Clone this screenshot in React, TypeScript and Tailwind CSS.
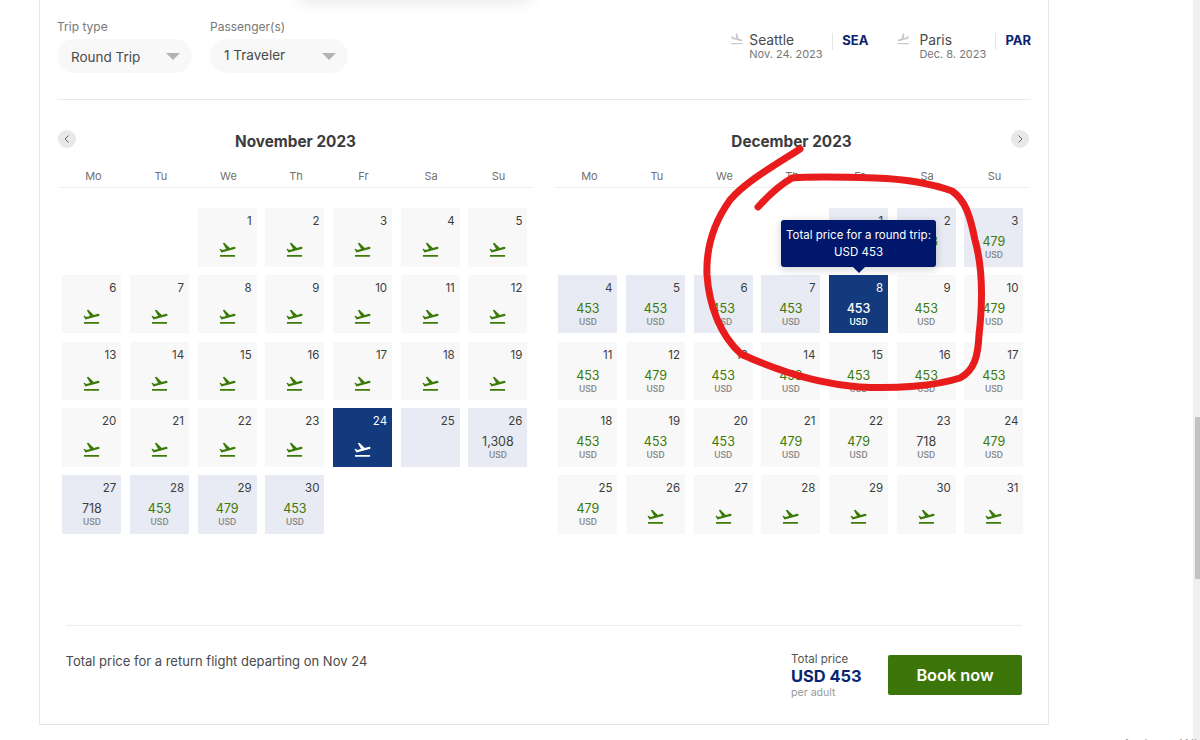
import React from "react";

type Cell = { d?: number; p?: string; v?: "plain" | "range" | "sel"; dark?: boolean };

function Takeoff({ className }: { className: string }) {
  return (
    <svg viewBox="0 0 24 24" className={className} fill="currentColor" aria-hidden="true">
      <path d="M2.5 19h19v2h-19zm19.57-9.36c-.21-.8-1.04-1.28-1.84-1.06L14.92 10l-6.9-6.43-1.93.51 4.14 7.17-4.97 1.33-1.97-1.54-1.45.39 2.59 4.49L21 11.49c.81-.23 1.28-1.05 1.07-1.85z" />
    </svg>
  );
}

function Land({ className }: { className: string }) {
  return (
    <svg viewBox="0 0 24 24" className={className} fill="currentColor" aria-hidden="true">
      <path d="M2.5 19h19v2h-19zm7.18-5.73 4.35 1.16 5.31 1.42c.8.21 1.62-.26 1.84-1.06.21-.8-.26-1.62-1.06-1.84l-5.31-1.42-2.76-9.02L10.12 2v8.28L5.15 8.95l-.93-2.32-1.45-.39v5.17l1.6.43 5.31 1.43z" />
    </svg>
  );
}

function Day({ c }: { c: Cell }) {
  if (!c.d) return <div />;
  const bg = c.v === "sel" ? "bg-[#123a7d] text-white" : c.v === "range" ? "bg-[#e8ebf3] text-[#3c3c3c]" : "bg-[#f8f8f8] text-[#3c3c3c]";
  return (
    <div className={`h-[58.5px] flex flex-col items-center ${bg}`}>
      <div className="w-full text-right pr-[5px] pt-[6px] text-[11.5px] leading-[14px]">{c.d}</div>
      {c.p ? (
        <>
          <div className={`mt-[6px] text-[12.5px] leading-[15px] ${c.v === "sel" ? "text-white font-medium" : c.dark ? "text-[#3f3f3f]" : "text-[#3c7a09]"}`}>{c.p}</div>
          <div className={`mt-[1px] text-[8.5px] leading-[11px] font-semibold ${c.v === "sel" ? "text-white" : "text-[#8a8a8a]"}`}>USD</div>
        </>
      ) : c.v === "range" ? null : (
        <Takeoff className={`w-[19px] h-[19px] mt-[12px] ${c.v === "sel" ? "text-white" : "text-[#3c7a09]"}`} />
      )}
    </div>
  );
}

const nov: Cell[] = [
  {}, {},
  ...Array.from({ length: 23 }, (_, i): Cell => ({ d: i + 1 })),
  { d: 24, v: "sel" },
  { d: 25, v: "range" },
  { d: 26, v: "range", p: "1,308", dark: true },
  { d: 27, v: "range", p: "718", dark: true },
  { d: 28, v: "range", p: "453" },
  { d: 29, v: "range", p: "479" },
  { d: 30, v: "range", p: "453" },
];

const decPrices: [string, boolean?][] = [
  ["453"], ["453"], ["479"],
  ["453"], ["453"], ["453"], ["453"], ["453"], ["453"], ["479"],
  ["453"], ["479"], ["453"], ["453"], ["453"], ["453"], ["453"],
  ["453"], ["453"], ["453"], ["479"], ["479"], ["718", true], ["479"],
  ["479"],
];

const dec: Cell[] = [
  {}, {}, {}, {},
  ...Array.from({ length: 31 }, (_, i): Cell => {
    const d = i + 1;
    const pr = decPrices[i];
    const v: Cell["v"] = d === 8 ? "sel" : d <= 7 ? "range" : "plain";
    return pr ? { d, p: pr[0], dark: pr[1], v } : { d, v };
  }),
];

const WEEK = ["Mo", "Tu", "We", "Th", "Fr", "Sa", "Su"];

function Month({ cells, title, side }: { cells: Cell[]; title: string; side: "l" | "r" }) {
  return (
    <div className="w-[473px]">
      <div className="relative h-[24px] flex items-center justify-center">
        <h2 className="text-[15.3px] font-bold text-[#3c3c3c] leading-[24px]">{title}</h2>
        <button className={`absolute top-[0px] w-[18px] h-[18px] rounded-full bg-[#e8e8e8] flex items-center justify-center text-[#666] ${side === "l" ? "-left-[1px]" : "-right-[1px]"}`}>
          <svg viewBox="0 0 10 10" className="w-[10px] h-[10px]" fill="none" stroke="currentColor" strokeWidth="1">
            <path d={side === "l" ? "M6.5 1.5 3 5l3.5 3.5" : "M3.5 1.5 7 5 3.5 8.5"} />
          </svg>
        </button>
      </div>
      <div className="grid grid-cols-7 mt-[14px] h-[20px] border-b border-[#ececec] pl-[5px] pr-[4px] gap-x-[8.67px] text-[11px] text-[#6f6f6f] text-center leading-[16px]">
        {WEEK.map((w) => <div key={w}>{w}</div>)}
      </div>
      <div className="grid grid-cols-7 gap-x-[8.67px] gap-y-[8.3px] pl-[3.4px] pr-[4.6px] mt-[20px]">
        {cells.map((c, i) => <Day key={i} c={c} />)}
      </div>
    </div>
  );
}

function Select({ label, value, width, textPad }: { label: string; value: string; width: string; textPad: string }) {
  return (
    <div>
      <div className="text-[12px] leading-[16px] text-[#777] mb-[4px]">{label}</div>
      <div className={`h-[34px] rounded-[17px] bg-[#f8f8f8] flex items-center justify-between pl-[14px] pr-[12px] ${width}`}>
        <span className={`text-[13.5px] text-[#4a4a4a] ${textPad}`}>{value}</span>
        <span className="w-0 h-0 border-l-[7px] border-r-[7px] border-t-[7px] border-l-transparent border-r-transparent border-t-[#b3b3b3]" />
      </div>
    </div>
  );
}

function Route({ icon, city, date, code, w, iconW }: { icon: React.ReactNode; city: string; date: string; code: string; w: string; iconW: string }) {
  return (
    <div className="flex items-start">
      <div className={`${iconW} -mt-[1px] text-[#c9c9c9]`}>{icon}</div>
      <div className={w}>
        <div className="text-[13.8px] leading-[14px] text-[#4a4a4a]">{city}</div>
        <div className="text-[11px] leading-[14px] text-[#777]">{date}</div>
      </div>
      <div className="border-l border-[#e6e6e6] h-[17px] pl-[9px] text-[13px] leading-[14px] font-bold text-[#0a2472]">{code}</div>
    </div>
  );
}

export default function App() {
  return (
    <div className="relative w-[1200px] h-[740px] overflow-hidden bg-white flex" style={{ fontFamily: "Inter, 'Liberation Sans', sans-serif" }}>
      <div className="flex-1 pl-[39px]">
        <div className="w-[1010px] h-[725px] border-x border-b border-[#e6e6e6] px-[17px]">
          <header className="h-[100px] border-b border-[#e8e8e8] flex justify-between pt-[19px] w-[974px]">
            <div className="flex gap-[18px]">
              <Select label="Trip type" value="Round Trip" width="w-[135px]" textPad="pt-[2px]" />
              <Select label="Passenger(s)" value="1 Traveler" width="w-[138px]" textPad="pb-[1px]" />
            </div>
            <div className="flex pt-[14px] gap-[28px]">
              <Route icon={<Land className="w-[14px] h-[14px]" />} iconW="w-[19px]" city="Seattle" date="Nov. 24. 2023" code="SEA" w="w-[83px]" />
              <Route icon={<Land className="w-[14px] h-[14px] -scale-x-100" />} iconW="w-[23px]" city="Paris" date="Dec. 8. 2023" code="PAR" w="w-[76px]" />
            </div>
          </header>
          <section className="flex gap-[23px] pt-[30px] pl-[2px] h-[525px]">
            <Month cells={nov} title="November 2023" side="l" />
            <Month cells={dec} title="December 2023" side="r" />
          </section>
          <footer className="ml-[9px] w-[956px] border-t border-[#ececec] flex justify-between pt-[27px]">
            <div className="-ml-[0.5px] text-[13px] leading-[16px] text-[#4a4a4a]">Total price for a return flight departing on Nov 24</div>
            <div className="flex gap-[26px]">
              <div className="w-[71px]">
                <div className="text-[11.5px] leading-[13px] text-[#555]">Total price</div>
                <div className="text-[16.4px] leading-[20px] font-bold text-[#0a2472] whitespace-nowrap">USD 453</div>
                <div className="text-[10.6px] leading-[13px] text-[#999]">per adult</div>
              </div>
              <button className="mt-[2px] w-[134px] h-[40px] rounded-[2px] bg-[#3c760a] text-white text-[16.3px] font-semibold">Book now</button>
            </div>
          </footer>
        </div>
      </div>
      <aside className="w-[7px] h-full bg-[#f0f0f0] pt-[417px] pl-[2px]">
        <div className="h-[162px] bg-[#c2c2c2]" />
      </aside>

      {/* overlays */}
      <div className="absolute -top-[16px] left-[300px] w-[230px] h-[16px] shadow-[0_0_18px_rgba(0,0,0,0.12)]" />
      <div className="absolute left-[781px] top-[220px] w-[155px] h-[47px] rounded-[3px] bg-[#00176b] text-white text-[11.5px] leading-[17px] text-center pt-[7px] shadow-[0_2px_8px_rgba(0,0,0,0.2)]">
        <div>Total price for a round trip:</div>
        <div>USD 453</div>
        <span className="absolute left-[72px] top-[47px] w-0 h-0 border-l-[6px] border-r-[6px] border-t-[6px] border-l-transparent border-r-transparent border-t-[#00176b]" />
      </div>
      <svg className="absolute left-0 top-0 w-[1200px] h-[740px] pointer-events-none" viewBox="0 0 1200 740" fill="none">
        <path
          d="M800 149 C775 165 745 182 730 200 C712 225 706 250 707 275 C709 305 720 335 741 354 C780 372 820 384 860 387 C895 389 935 386 960 378 C975 370 978 355 979 335 C983 300 982 265 975 240 C970 215 965 200 952 191 C930 183 905 179 875 178 C845 177 815 176 792 178 C778 186 768 196 758 207"
          stroke="#e81c1c"
          strokeWidth="7"
          strokeLinecap="round"
          strokeLinejoin="round"
        />
      </svg>
      <div className="absolute left-[1122px] top-[734px] text-[14px] text-[#9a9a9a] whitespace-nowrap">Activate Windows</div>
    </div>
  );
}
